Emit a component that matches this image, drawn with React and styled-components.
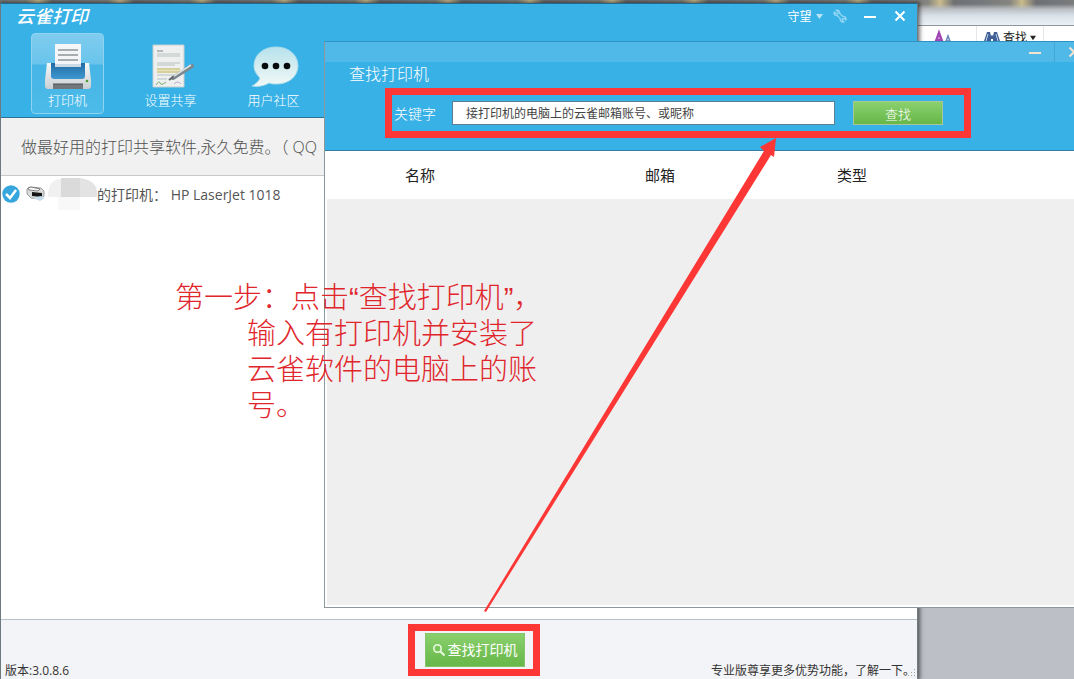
import React, { useState } from 'react';
import styled, { createGlobalStyle } from 'styled-components';

const COLORS = {
  sky: '#37b1e6',
  sky_light: '#50b9e7',
  sky_dark: '#2f7ea6',
  red: '#fd3636',
  grey_10: '#f1f1f1',
  grey_12: '#efefef',
  grey_70: '#505050',
  footer: '#f3f4f7',
  white: '#ffffff',
};

const GlobalStyle = createGlobalStyle`
  * {
    box-sizing: border-box;
  }
  body {
    margin: 0;
    font-family: 'Open Sans', 'Noto Sans CJK SC', sans-serif;
    font-weight: 300;
  }
  button, input {
    font: inherit;
  }
`;

const Desktop = styled.div`
  position: relative;
  min-height: 100vh;
  overflow: hidden;
  background: #bcbfc5;
`;

const OfficeTop = styled.div`
  height: 25px;
  background:
    linear-gradient(to bottom, transparent 4px, #b9bdc2 9px, #dbe3ea 16px, #e9f0f6 25px),
    repeating-linear-gradient(to right, #77797c 0, #85857f 26px, #c9bb8c 38px, #6e7074 52px, #77797c 82px);
`;

const OfficeRibbon = styled.div`
  display: flex;
  align-items: flex-start;
  justify-content: flex-end;
  height: 24px;
  border-top: 1px solid #8f959b;
  background: ${COLORS.white};
  color: #222;
  font-size: 12px;
  font-weight: 400;
  line-height: 24px;
`;

const RibbonGroup = styled.div`
  display: flex;
  align-items: center;
  gap: 3px;
  height: 24px;
  padding: 0 ${(props) => props.$pad};
  border-right: 1px solid #e3e6ea;
`;

const RibbonSpace = styled.div`
  width: 30px;
`;

const MainWindow = styled.main`
  position: absolute;
  top: 3px;
  left: 0;
  right: 156px;
  bottom: 0;
  display: flex;
  flex-direction: column;
  border: 1px solid #6f7a80;
  border-top-color: #22698f;
  border-bottom: 0;
  background: ${COLORS.white};
  box-shadow: 1px 0 4px 1px rgba(0, 0, 0, 0.55);
`;

const MainHeader = styled.header`
  height: 114px;
  border-bottom: 1px solid #2c7196;
  background: ${COLORS.sky};
  color: ${COLORS.white};
`;

const TitleBar = styled.div`
  display: flex;
  align-items: center;
  justify-content: space-between;
  height: 24px;
  padding-left: 15px;
`;

const Brand = styled.h1`
  margin: 0;
  font-size: 18px;
  font-style: italic;
  font-weight: 500;
  line-height: 24px;
`;

const WindowControls = styled.div`
  display: flex;
  align-items: center;
  font-size: 12px;
  font-weight: 400;
`;

const IconButton = styled.button`
  display: flex;
  align-items: center;
  justify-content: center;
  gap: 4px;
  width: ${(props) => props.$width};
  height: 20px;
  padding: 0;
  border: 0;
  background: none;
  color: inherit;
  cursor: pointer;
`;

const Toolbar = styled.nav`
  display: flex;
  gap: 30px;
  padding: 5px 30px;
`;

const Tool = styled.button`
  display: flex;
  flex-direction: column;
  align-items: center;
  width: 73px;
  height: 81px;
  padding: 8px 0 0;
  border: 1px solid ${(props) => (props.$active ? '#8fd3f0' : 'transparent')};
  border-radius: 4px;
  background: ${(props) =>
    props.$active
      ? 'linear-gradient(to bottom, #80ccef 0, #69c4ec 30px, #47b5e5 31px, #4bbbea 100%)'
      : 'none'};
  color: ${COLORS.white};
  font-size: 13px;
  line-height: 18px;
  white-space: nowrap;
  cursor: pointer;
`;

const Banner = styled.p`
  height: 58px;
  margin: 0;
  padding: 0 20px;
  overflow: hidden;
  border-bottom: 1px solid #c8c8c8;
  background: ${COLORS.grey_10};
  color: ${COLORS.grey_70};
  font-size: 16px;
  line-height: 58px;
  white-space: nowrap;
`;

const PrinterList = styled.ul`
  flex: 1;
  margin: 0;
  padding: 0;
  list-style: none;
`;

const PrinterRow = styled.li`
  display: flex;
  align-items: center;
  height: 36px;
  color: #555;
  font-size: 14px;
  font-weight: 400;
  white-space: pre;
`;

const Footer = styled.footer`
  display: grid;
  grid-template-columns: minmax(0, 14fr) auto minmax(0, 13fr);
  align-items: end;
  height: 60px;
  border-top: 1px solid #b9c2c8;
  background: ${COLORS.footer};
  color: #333;
  font-size: 12px;
  font-weight: 400;
  line-height: 16px;
`;

const Version = styled.span`
  padding-left: 4px;
`;

const Promo = styled.span`
  position: relative;
  padding-right: 2px;
  text-align: right;
  white-space: nowrap;
  svg {
    position: absolute;
    right: 1px;
    bottom: 0;
  }
`;

const Marked = styled.div`
  margin-bottom: 3px;
  padding: 2px 8px 2px 10px;
  border: 7px solid ${COLORS.red};
`;

const GreenButton = styled.button`
  display: flex;
  align-items: center;
  justify-content: center;
  gap: 2px;
  width: ${(props) => props.$width};
  height: ${(props) => props.$height};
  padding: 0;
  border: 1px solid ${(props) => props.$border};
  background: linear-gradient(to bottom, #8ad06d, #67b749);
  color: ${COLORS.white};
  font-size: ${(props) => props.$size};
  cursor: pointer;
`;

const Dialog = styled.section`
  position: absolute;
  top: 41px;
  left: 324px;
  right: -19px;
  bottom: 71px;
  display: flex;
  flex-direction: column;
  border: 1px solid #8d979c;
  border-top-color: #2e91c0;
  background: ${COLORS.white};
`;

const DialogHeader = styled.header`
  padding-bottom: 12px;
  border-bottom: 1px solid ${COLORS.sky_dark};
  background: ${COLORS.sky};
  color: ${COLORS.white};
`;

const DialogBar = styled.div`
  display: flex;
  justify-content: flex-end;
  height: 20px;
  background: ${COLORS.sky_light};
  color: #f6e3cf;
  button + button {
    border-left: 1px solid #43a6d2;
  }
`;

const DialogTitle = styled.h2`
  margin: 0 0 2px;
  padding-left: 24px;
  font-size: 16px;
  font-weight: 300;
  line-height: 24px;
`;

const SearchForm = styled.form`
  display: flex;
  align-items: center;
  width: fit-content;
  height: 50px;
  margin-left: 60px;
  padding: 0 21px 0 2px;
  border: 7px solid ${COLORS.red};
  label {
    margin-right: 16px;
    font-size: 14px;
  }
`;

const KeywordInput = styled.input`
  width: 383px;
  height: 24px;
  margin-right: 18px;
  padding: 0 13px;
  border: 1px solid #5f7f90;
  border-radius: 0;
  outline: 0;
  background: ${COLORS.white};
  color: #444;
  font-size: 12px;
  font-weight: 400;
`;

const ResultArea = styled.div`
  flex: 1;
  margin: 0 0 2px 2px;
  background: ${COLORS.grey_12};
`;

const ResultTable = styled.table`
  width: 100%;
  table-layout: fixed;
  border-collapse: collapse;
  background: ${COLORS.white};
  th {
    height: 48px;
    padding: 0 0 2px 78px;
    color: #222;
    font-size: 15px;
    font-weight: 400;
    text-align: left;
  }
  th:nth-child(1) {
    width: 240px;
  }
  th:nth-child(2) {
    width: 192px;
  }
`;

const Note = styled.p`
  position: absolute;
  top: 280px;
  left: 175px;
  width: 372px;
  margin: 0;
  padding-left: 72px;
  color: #e0262c;
  font-family: 'Liberation Sans', 'Noto Sans CJK SC', sans-serif;
  font-size: 29px;
  font-weight: 300;
  line-height: 36px;
  text-indent: -72px;
  pointer-events: none;
`;

const Arrow = styled.svg`
  position: absolute;
  top: 138px;
  left: 484px;
  pointer-events: none;
`;

const MinusIcon = () => (
  <svg width="12" height="12" viewBox="0 0 12 12" stroke="currentColor" strokeWidth="2">
    <path d="M0 7h12" />
  </svg>
);

const CrossIcon = () => (
  <svg width="12" height="12" viewBox="0 0 12 12" stroke="currentColor" strokeWidth="2">
    <path d="M1.500 1.500l9 9M10.500 1.500l-9 9" />
  </svg>
);

const CaretIcon = ({ color = 'currentColor', size = 7 }) => (
  <svg width={size} height={size} viewBox="0 0 7 7" fill={color}>
    <path d="M0 1h7L3.500 6z" />
  </svg>
);

const WrenchIcon = () => (
  <svg width="14" height="14" viewBox="0 0 14 14" fill="none" stroke="#9bdaf6" strokeWidth="1.200">
    <path d="M3.200 1.200L5 3v1.800H3.200L1.300 3C.5 4.800 1.800 7 4.400 6.700l2.800 2.900c-.4 2.300 1.500 4 3.800 3.400L9.200 11.200l.3-1.600 1.700-.3 1.700 1.700c.7-2.200-1-4.100-3.300-3.700L6.800 4.500C7 2 5.200.5 3.200 1.200z" />
  </svg>
);

const SearchIcon = () => (
  <svg width="14" height="14" viewBox="0 0 14 14" fill="none" stroke="#eafbe2" strokeWidth="1.600">
    <circle cx="5.500" cy="5.500" r="3.700" />
    <path d="M8.500 8.500l4 4" strokeWidth="2" />
  </svg>
);

const PrinterIcon = () => (
  <svg width="50" height="49" viewBox="0 0 50 49">
    <defs>
      <linearGradient id="shell" x2="0" y2="1">
        <stop offset="0" stopColor="#f7f8f8" />
        <stop offset="1" stopColor="#c9cfd2" />
      </linearGradient>
      <linearGradient id="tray" x2="0" y2="1">
        <stop offset="0" stopColor="#236ba2" />
        <stop offset="1" stopColor="#3f98d2" />
      </linearGradient>
    </defs>
    <path d="M4 21h42l2 17v6q0 3-3 3H5q-3 0-3-3v-6z" fill="url(#shell)" />
    <path d="M8 21h34v13q0 3-3 3H11q-3 0-3-3z" fill="url(#tray)" />
    <path d="M12 2h26v22H12z" fill="#f3f5f6" />
    <path d="M12 22h26v3H12z" fill="#cad9e3" />
    <path d="M15 8h20M15 13h20M15 18h20" stroke="#8f969b" strokeWidth="1.500" />
    <path d="M10 42h30v5H10z" fill="#71777b" />
    <path d="M10 42h30" stroke="#4f5356" />
    <circle cx="44" cy="39" r="1.300" fill="#4e9c3a" />
  </svg>
);

const DocumentIcon = () => (
  <svg width="50" height="49" viewBox="0 0 50 49">
    <path d="M7 3h31v42H7z" fill="#edf0ee" stroke="#c5ced0" />
    <path d="M11 9h6" stroke="#77858b" />
    <path d="M11 12h23M11 14h23M11 21h23M11 23h18M11 33h19M11 37h10" stroke="#b9c0c2" />
    <path d="M11 26h23v5H11z" fill="#e8e3b9" />
    <path d="M11 27h23M11 30h23" stroke="#c4bd84" />
    <path d="M10 43q3-5 4-2t6-1" fill="none" stroke="#79ae71" />
    <path d="M28 42q4-4 7 0" fill="none" stroke="#bca7cc" />
    <path d="M27 36l19-12" stroke="#7b868d" strokeWidth="4" strokeLinecap="round" />
    <path d="M28 34l17-11" stroke="#dbe1e3" strokeWidth="1.500" />
    <path d="M23 38l4-3" stroke="#5b6368" strokeWidth="2" />
  </svg>
);

const ChatIcon = () => (
  <svg width="50" height="49" viewBox="0 0 50 49">
    <defs>
      <linearGradient id="bubble" x2="0" y2="1">
        <stop offset="0" stopColor="#b5e2ed" />
        <stop offset="0.500" stopColor="#d6edf0" />
        <stop offset="1" stopColor="#f1f9f8" />
      </linearGradient>
    </defs>
    <path
      d="M27 5c13 0 22 8 22 19 0 10-9 18-21 18-3 0-6 0-8-1-5 3-11 4-17 3 4-2 7-5 8-8C7 32 5 28 5 24 5 13 14 5 27 5z"
      fill="url(#bubble)"
      stroke="#a8dce9"
    />
    <circle cx="16" cy="24" r="3.300" fill="#080b0c" />
    <circle cx="27" cy="24" r="3.300" fill="#080b0c" />
    <circle cx="38" cy="24" r="3.300" fill="#080b0c" />
  </svg>
);

const CheckIcon = () => (
  <svg width="20" height="20" viewBox="0 0 20 20">
    <circle cx="10" cy="10" r="8.700" fill="#36a7de" />
    <path d="M5 10l4 4 6-8" fill="none" stroke="#fff" strokeWidth="2.500" />
  </svg>
);

const SmallPrinterIcon = () => (
  <svg width="27" height="16" viewBox="0 0 27 16">
    <path d="M6 3l3-2 11 1 3 3v5l-4 3-9-1-4-4z" fill="#d9dcdd" stroke="#8a8a8a" strokeWidth=".8" />
    <path d="M7 2l3-1 9 2-2 2-9-1z" fill="#fafafa" stroke="#555" strokeWidth=".7" />
    <path d="M11 6l10 1v4l-10-1z" fill="#151515" />
    <path d="M12 12l8-2 4 2-5 3z" fill="#c7ddec" />
  </svg>
);

const NameMask = () => (
  <svg width="49" height="32" viewBox="0 0 49 32">
    <path d="M0 19Q0 1 13 1v18z" fill="#f0f0f0" />
    <path d="M13 0h19v19H13z" fill="#dadada" />
    <path d="M32 0q16 2 17 14v5H32z" fill="#e3e3e3" />
    <path d="M10 19h22v13H10z" fill="#f8f8f8" />
  </svg>
);

const BinocularsIcon = () => (
  <svg width="16" height="16" viewBox="0 0 16 16" fill="#405f96">
    <path d="M3 2h3l1 4 1-1 1 1 1-4h3l3 9v4H9V9H7v6H0v-4z" />
    <path d="M4 4l-2 7M12 4l2 7" stroke="#c4d3ec" />
  </svg>
);

const FontSizeIcon = () => (
  <svg width="18" height="18" viewBox="0 0 18 18" fill="none">
    <path d="M1 15L5 4l4 11M3 11h5" stroke="#a146b5" strokeWidth="2.500" />
    <path d="M11 15l3-8 3 8M12 12h4" stroke="#6686b5" strokeWidth="1.500" />
  </svg>
);

const GripIcon = () => (
  <svg width="8" height="10" viewBox="0 0 8 10" fill="#a4a7aa">
    <path d="M6 0h1v1H6zM3 3h1v1H3zM6 3h1v1H6zM0 6h1v1H0zM3 6h1v1H3zM6 6h1v1H6z" />
  </svg>
);

const tools = [
  { label: '打印机', icon: <PrinterIcon /> },
  { label: '设置共享', icon: <DocumentIcon /> },
  { label: '用户社区', icon: <ChatIcon /> },
];

const SearchDialog = () => {
  const [keyword, setKeyword] = useState('接打印机的电脑上的云雀邮箱账号、或昵称');

  return (
    <Dialog>
      <DialogHeader>
        <DialogBar>
          <IconButton $width="39px" aria-label="最小化">
            <MinusIcon />
          </IconButton>
          <IconButton $width="38px" aria-label="关闭">
            <CrossIcon />
          </IconButton>
        </DialogBar>
        <DialogTitle>查找打印机</DialogTitle>
        <SearchForm onSubmit={(e) => e.preventDefault()}>
          <label htmlFor="keyword">关键字</label>
          <KeywordInput
            id="keyword"
            type="text"
            value={keyword}
            onChange={(e) => setKeyword(e.target.value)}
          />
          <GreenButton type="submit" $width="90px" $height="24px" $size="13px" $border="#a9c79b">
            查找
          </GreenButton>
        </SearchForm>
      </DialogHeader>
      <ResultArea>
        <ResultTable>
          <thead>
            <tr>
              <th>名称</th>
              <th>邮箱</th>
              <th>类型</th>
            </tr>
          </thead>
        </ResultTable>
      </ResultArea>
    </Dialog>
  );
};

const App = () => {
  const [activeTool, setActiveTool] = useState('打印机');

  return (
    <Desktop>
      <GlobalStyle />
      <OfficeTop />
      <OfficeRibbon>
        <RibbonGroup $pad="24px">
          <FontSizeIcon />
        </RibbonGroup>
        <RibbonGroup $pad="7px">
          <BinocularsIcon />
          查找
          <CaretIcon size={6} />
        </RibbonGroup>
        <RibbonSpace />
      </OfficeRibbon>
      <MainWindow>
        <MainHeader>
          <TitleBar>
            <Brand>云雀打印</Brand>
            <WindowControls>
              <IconButton $width="36px">
                守望
                <CaretIcon color="#b9e4f7" />
              </IconButton>
              <IconButton $width="34px" aria-label="设置">
                <WrenchIcon />
              </IconButton>
              <IconButton $width="26px" aria-label="最小化">
                <MinusIcon />
              </IconButton>
              <IconButton $width="34px" aria-label="关闭">
                <CrossIcon />
              </IconButton>
            </WindowControls>
          </TitleBar>
          <Toolbar>
            {tools.map((tool) => (
              <Tool
                key={tool.label}
                $active={activeTool === tool.label}
                onClick={() => setActiveTool(tool.label)}
              >
                {tool.icon}
                {tool.label}
              </Tool>
            ))}
          </Toolbar>
        </MainHeader>
        <Banner>做最好用的打印共享软件,永久免费。（ QQ</Banner>
        <PrinterList>
          <PrinterRow>
            <CheckIcon />
            <SmallPrinterIcon />
            <NameMask />
            的打印机： HP LaserJet 1018
          </PrinterRow>
        </PrinterList>
        <Footer>
          <Version>版本:3.0.8.6</Version>
          <Marked>
            <GreenButton $width="100px" $height="34px" $size="14px" $border="#86c56c">
              <SearchIcon />
              查找打印机
            </GreenButton>
          </Marked>
          <Promo>
            专业版尊享更多优势功能，了解一下。
            <GripIcon />
          </Promo>
        </Footer>
      </MainWindow>
      <SearchDialog />
      <Note>第一步：点击“查找打印机”，输入有打印机并安装了云雀软件的电脑上的账号。</Note>
      <Arrow width="293" height="475" viewBox="0 0 293 475">
        <path d="M292 0l-16 9 4 4L0 473l2 1L287 17l3 2z" fill={COLORS.red} />
      </Arrow>
    </Desktop>
  );
};

export default App;
